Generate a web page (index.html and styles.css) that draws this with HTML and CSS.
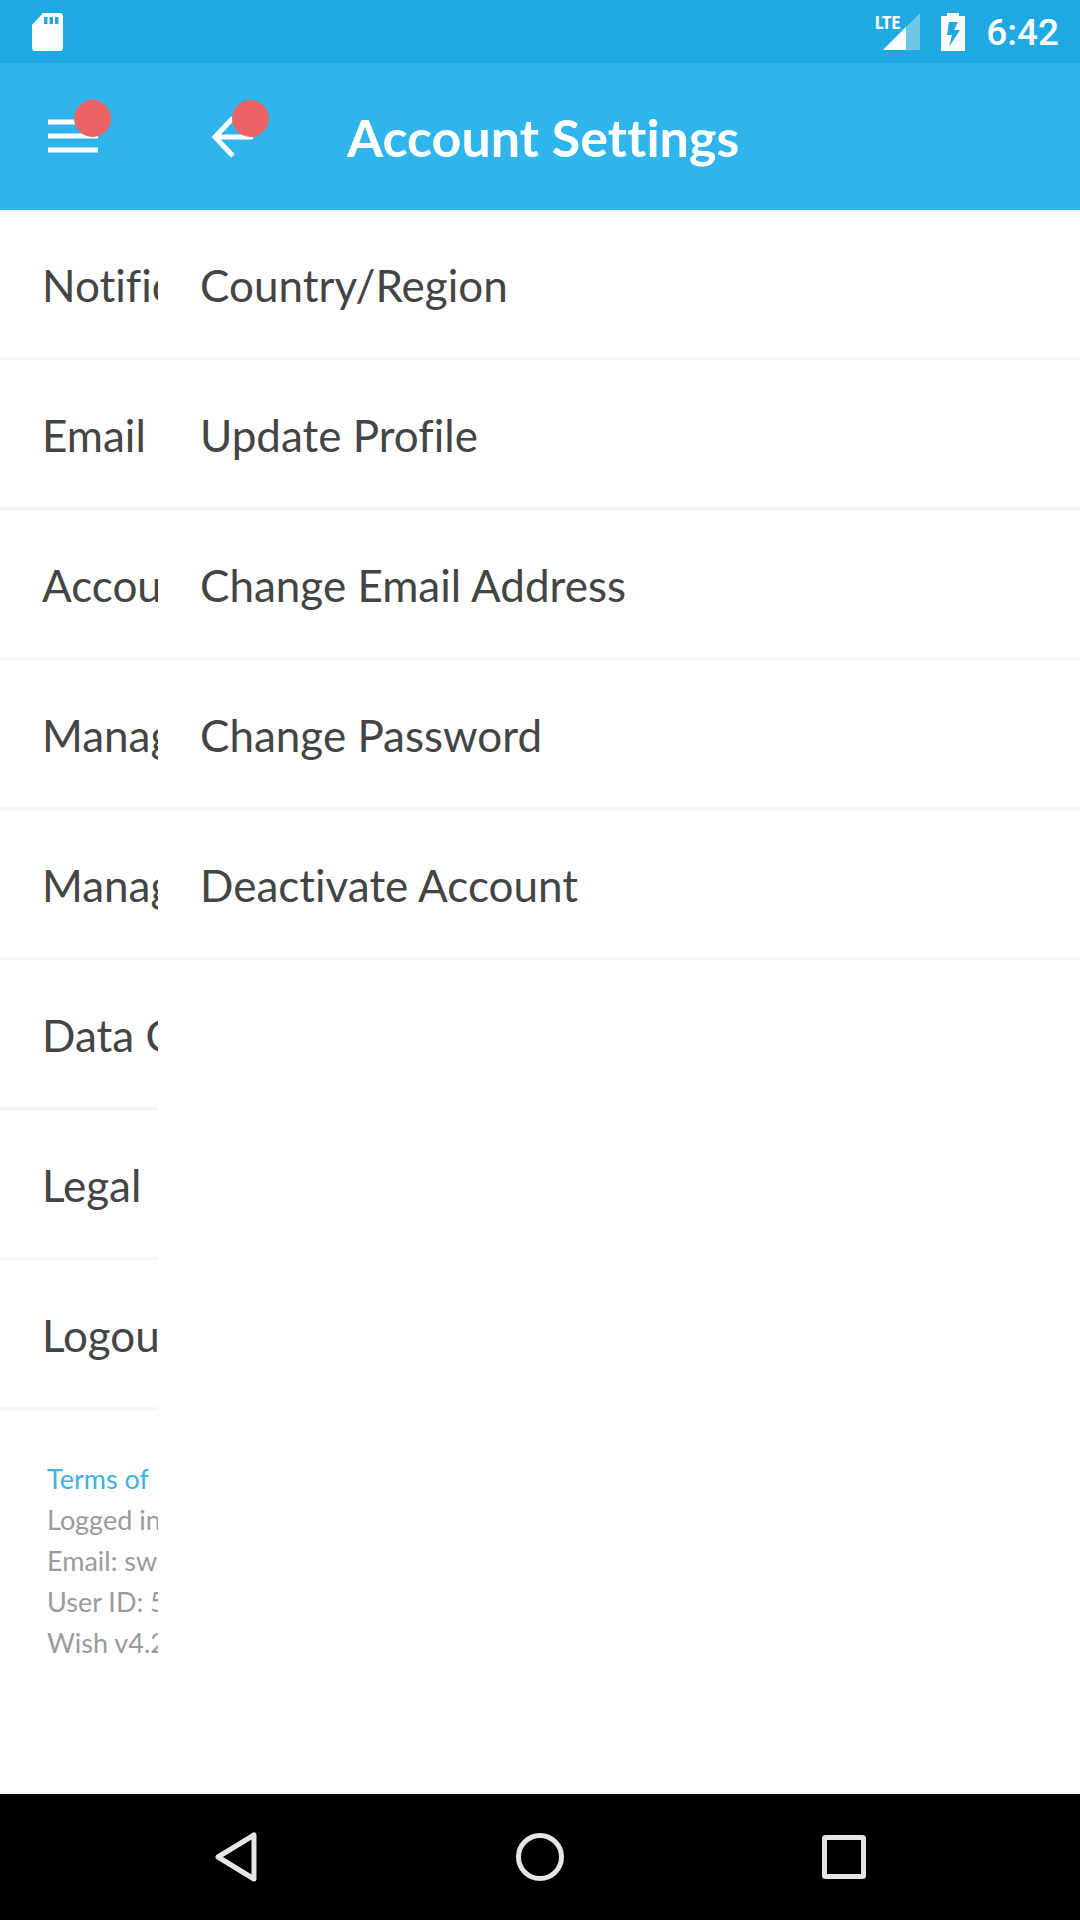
FILE: index.html
```html
<!DOCTYPE html>
<html lang="en">
<head>
<meta charset="utf-8">
<meta name="viewport" content="width=device-width, initial-scale=1">
<title>Account Settings</title>
<link rel="stylesheet" href="styles.css">
</head>
<body>
<div class="status-bar">
  <svg class="sd-icon" width="31" height="38" viewBox="0 0 31 38" aria-hidden="true"><path fill="#fff" fill-rule="evenodd" d="M11 0h16.500a3.500 3.500 0 0 1 3.500 3.500v31a3.500 3.500 0 0 1-3.500 3.500h-24a3.500 3.500 0 0 1-3.500-3.500V12zM12 4v7h3.500V4zM17.500 4v7H21V4zM23 4v7h3.500V4z"/></svg>
  <div class="status-right">
    <svg class="signal" width="45" height="38" viewBox="0 0 45 38" role="img" aria-label="LTE signal"><path fill="#fff" fill-opacity=".35" d="M45 0v37H8z"/><path fill="#fff" d="M31 14v23H8z"/><text class="lte" x="0" y="16">LTE</text></svg>
    <svg width="24" height="38" viewBox="0 0 24 38" role="img" aria-label="Battery charging"><path fill="#fff" fill-rule="evenodd" d="M6 0h12v3h6v35H0V3h6zM8 9L6 22h5L8 34 19 17h-6l4-8z"/></svg>
    <span class="clock">6:42</span>
  </div>
</div>
<header class="app-bar">
  <div class="side">
    <button class="icon-button menu-button" type="button" aria-label="Menu">
      <svg width="50" height="48" viewBox="0 0 50 48"><path stroke="#fff" stroke-width="5" d="M0 9h50M0 23h50M0 37h50"/></svg>
      <span class="badge"></span>
    </button>
  </div>
  <div class="bar-main">
    <button class="icon-button back-button" type="button" aria-label="Back">
      <svg width="42" height="48" viewBox="0 0 42 48"><path fill="none" stroke="#fff" stroke-width="5" d="M22 5L4 24l18 19M3 24h39"/></svg>
      <span class="badge"></span>
    </button>
    <h1 class="title">Account Settings</h1>
  </div>
</header>
<main class="panels">
  <nav class="side" aria-label="Settings">
    <ul class="menu">
      <li><a href="#">Notific</a></li>
      <li><a href="#">Email</a></li>
      <li><a href="#">Accou</a></li>
      <li><a href="#">Manag</a></li>
      <li><a href="#">Manag</a></li>
      <li><a href="#">Data C</a></li>
      <li><a href="#">Legal</a></li>
      <li><a href="#">Logou</a></li>
    </ul>
    <div class="info">
      <a href="#">Terms of</a>
      <p>Logged in</p>
      <p>Email: sw</p>
      <p>User ID: 5</p>
      <p>Wish v4.2</p>
    </div>
  </nav>
  <section class="detail" aria-label="Account settings">
    <ul class="menu">
      <li><a href="#">Country/Region</a></li>
      <li><a href="#">Update Profile</a></li>
      <li><a href="#">Change Email Address</a></li>
      <li><a href="#">Change Password</a></li>
      <li><a href="#">Deactivate Account</a></li>
    </ul>
  </section>
</main>
<footer class="system-nav">
  <button type="button" aria-label="Back"><svg width="50" height="50" viewBox="0 0 50 50"><path d="M43 3v44L7 25z"/></svg></button>
  <button type="button" aria-label="Home"><svg width="50" height="50" viewBox="0 0 50 50"><circle cx="25" cy="25" r="21.500"/></svg></button>
  <button type="button" aria-label="Recent apps"><svg width="50" height="50" viewBox="0 0 50 50"><rect x="5.500" y="5.500" width="39" height="39" rx="1"/></svg></button>
</footer>
</body>
</html>
```
FILE: styles.css
```css
* {
  box-sizing: border-box;
  margin: 0;
  padding: 0;
}

body {
  display: flex;
  flex-direction: column;
  min-height: 100vh;
  background: #fefefe;
  color: #434545;
  font-family: Lato, "Open Sans", sans-serif;
  font-variant-ligatures: none;
}

button {
  border: 0;
  background: none;
}

a {
  color: inherit;
  text-decoration: none;
}

svg {
  display: block;
}

.status-bar {
  display: flex;
  align-items: center;
  justify-content: space-between;
  height: 63px;
  padding: 0 21px 0 32px;
  background: #1fa9e2;
}

.status-right {
  display: flex;
  align-items: center;
  gap: 21px;
}

.signal {
  overflow: visible;
}

.lte {
  fill: #fff;
  font: bold 18px "Liberation Sans Narrow", "Roboto Condensed", Roboto, sans-serif;
}

.clock {
  padding-top: 3px;
  color: #fff;
  font: 500 37px/44px Roboto, sans-serif;
}

.app-bar {
  display: flex;
  height: 147px;
  background: #2fb5eb;
}

.side {
  flex: none;
  width: 158px;
  overflow: hidden;
}

.app-bar .side,
.bar-main {
  display: flex;
  align-items: center;
}

.app-bar .side {
  padding-left: 48px;
}

.bar-main {
  flex: 1;
  gap: 94px;
  padding-left: 53px;
}

.icon-button {
  position: relative;
}

.badge {
  position: absolute;
  top: -13px;
  right: -13px;
  width: 37px;
  height: 37px;
  border-radius: 50%;
  background: #ed6365;
}

.back-button .badge {
  right: -16px;
}

.title {
  color: #fff;
  font-size: 52px;
  font-weight: 700;
  line-height: 60px;
}

.panels {
  display: flex;
  flex: 1;
}

.detail {
  flex: 1;
}

.menu {
  list-style: none;
}

.menu a {
  display: flex;
  align-items: center;
  height: 150px;
  padding-left: 42px;
  padding-top: 2px;
  border-bottom: 3px solid #f6f6f7;
  font-size: 44px;
  line-height: 52px;
  white-space: nowrap;
}

.info {
  padding: 48px 0 0 47px;
  color: #9a9c9c;
  font-size: 27px;
  line-height: 41px;
  white-space: nowrap;
}

.info a {
  display: block;
  color: #3cb4e0;
}

.system-nav {
  display: grid;
  grid-template-columns: repeat(3, 1fr);
  height: 126px;
  padding: 0 84px;
  background: #000;
}

.system-nav button {
  display: flex;
  align-items: center;
  justify-content: center;
}

.system-nav svg {
  fill: none;
  stroke: #e6e6e6;
  stroke-width: 5;
  stroke-linejoin: round;
}
```
